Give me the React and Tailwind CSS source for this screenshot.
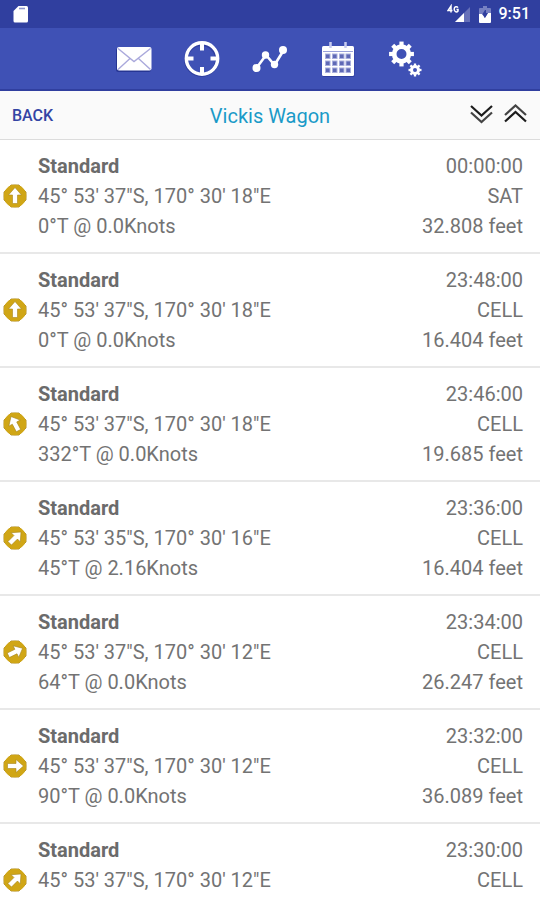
const rows = [
  { time: "00:00:00", pos: "45° 53' 37\"S, 170° 30' 18\"E", source: "SAT", speed: "0°T @ 0.0Knots", alt: "32.808 feet", heading: 0 },
  { time: "23:48:00", pos: "45° 53' 37\"S, 170° 30' 18\"E", source: "CELL", speed: "0°T @ 0.0Knots", alt: "16.404 feet", heading: 0 },
  { time: "23:46:00", pos: "45° 53' 37\"S, 170° 30' 18\"E", source: "CELL", speed: "332°T @ 0.0Knots", alt: "19.685 feet", heading: 332 },
  { time: "23:36:00", pos: "45° 53' 35\"S, 170° 30' 16\"E", source: "CELL", speed: "45°T @ 2.16Knots", alt: "16.404 feet", heading: 45 },
  { time: "23:34:00", pos: "45° 53' 37\"S, 170° 30' 12\"E", source: "CELL", speed: "64°T @ 0.0Knots", alt: "26.247 feet", heading: 64 },
  { time: "23:32:00", pos: "45° 53' 37\"S, 170° 30' 12\"E", source: "CELL", speed: "90°T @ 0.0Knots", alt: "36.089 feet", heading: 90 },
  { time: "23:30:00", pos: "45° 53' 37\"S, 170° 30' 12\"E", source: "CELL", heading: 45 },
];

function StatusBar() {
  return (
    <div className="flex h-7 shrink-0 items-center justify-between bg-[#303f9f] pr-[10px] pl-3 text-white">
      <svg className="h-5 w-5" viewBox="0 0 20 20">
        <path d="M6.5 2H14.5A1.5 1.5 0 0 1 16 3.5V17A1.5 1.5 0 0 1 14.5 18.5H3A1.5 1.5 0 0 1 1.5 17V7Z" fill="#fff" />
        <path d="M7 4.5H13" stroke="#8f98cf" strokeWidth="1.6" />
      </svg>
      <div className="flex items-center gap-2">
        <svg className="h-5 w-6" viewBox="0 0 24 20">
          <path d="M23 3V18H8Z" fill="#6670b9" />
          <path d="M17 9V18H8Z" fill="#fff" />
          <path d="M4 8.500V2L1 6.500H5.500M11 3.600C10 2.300 7.200 2.300 7.200 5.300S10 8.500 11 7V5.600H9.500" fill="none" stroke="#fff" strokeWidth="1.500" />
        </svg>
        <svg className="h-5 w-3" viewBox="0 0 12 20">
          <path d="M4 2H8V4H11Q12 4 12 5V10H0V5Q0 4 1 4H4Z" fill="#7680c2" />
          <path d="M0 10H3L6 14L9 9H12V18Q12 19 11 19H1Q0 19 0 18Z" fill="#fff" />
          <path d="M6 6L3.500 10H5.500V14L9 9H7V6Z" fill="#303f9f" />
        </svg>
        <span className="text-base font-medium">9:51</span>
      </div>
    </div>
  );
}

function MailIcon() {
  return (
    <svg className="h-9 w-9" viewBox="0 0 36 36">
      <rect x="0" y="7" width="35" height="24" rx="2.500" fill="#263593" />
      <rect x="1" y="6" width="34.500" height="23.500" rx="2" fill="#fff" />
      <path d="M2 7.500L18 20.500L34.500 7.500M2 28.500L14 17.500M34.500 28.500L22.500 17.500" fill="none" stroke="#aaa9dc" strokeWidth="1.400" />
    </svg>
  );
}

function TargetIcon() {
  return (
    <svg className="h-9 w-9" viewBox="0 0 36 36" fill="none" stroke="#fff">
      <circle cx="17.500" cy="18.500" r="15.500" stroke="#303f9f" strokeWidth="4" />
      <circle cx="18" cy="17.500" r="15.700" strokeWidth="3.400" />
      <path d="M18 2V9.500M18 26V33.500M2 17.500H9.500M26.500 17.500H34" strokeWidth="4" />
    </svg>
  );
}

function TrackIcon() {
  return (
    <svg className="h-9 w-9" viewBox="0 0 36 36" fill="#fff">
      <path d="M4.500 27L14 14L22.500 24L31.500 9.500" fill="none" stroke="#fff" strokeWidth="2.600" />
      <circle cx="4.500" cy="27" r="4" />
      <circle cx="13.500" cy="14" r="3.700" />
      <circle cx="22.500" cy="23.500" r="3.700" />
      <circle cx="31" cy="9" r="4" />
    </svg>
  );
}

function CalendarIcon() {
  return (
    <svg className="h-9 w-9" viewBox="0 0 36 36">
      <rect x="2.500" y="7" width="32" height="29" rx="1.500" fill="#303f9f" />
      <rect x="2" y="5" width="32" height="30" rx="1.500" fill="#fff" />
      <path d="M10.500 1V7M25.500 1V7" stroke="#c8ccef" strokeWidth="2.500" />
      <path d="M3 10.500H33" stroke="#9aa2da" strokeWidth="1" />
      {[13, 20, 27].map((y) => (
        <g key={y} fill="#5f69b5" stroke="#a9afde" strokeWidth="1">
          <rect x="5.500" y={y} width="4.500" height="4.500" />
          <rect x="12.500" y={y} width="4.500" height="4.500" />
          <rect x="19.500" y={y} width="4.500" height="4.500" />
          <rect x="26" y={y} width="4.500" height="4.500" />
        </g>
      ))}
    </svg>
  );
}

function Gear({ x, y, r, hole, tooth }) {
  return (
    <g transform={`translate(${x} ${y})`}>
      <circle r={(r + hole) / 2} fill="none" stroke="#fff" strokeWidth={r - hole} />
      {[0, 45, 90, 135, 180, 225, 270, 315].map((a) => (
        <rect key={a} x={-tooth / 2} y={-r - tooth * 0.65} width={tooth} height={tooth} fill="#fff" transform={`rotate(${a})`} />
      ))}
    </g>
  );
}

function SettingsIcon() {
  return (
    <svg className="h-9 w-9" viewBox="0 0 36 36">
      <Gear x={13.500} y={13} r={9.7} hole={5} tooth={4.2} />
      <Gear x={27} y={29} r={5} hole={2} tooth={2.3} />
    </svg>
  );
}

function Heading({ deg }) {
  return (
    <svg className="mt-[33px] h-6 w-6 shrink-0" viewBox="0 0 24 24">
      <path d="M8 1H16L23 8V16L16 23H8L1 16V8Z" fill="#d0a616" stroke="#b3943a" strokeWidth="1" strokeLinejoin="round" />
      <circle cx="12" cy="12" r="11.200" fill="#d0a616" />
      <path
        d="M12 3.500L18.500 11H14.500V19.500H9.500V11H5.500Z"
        fill="#fff"
        stroke="#a8871c"
        strokeWidth="0.600"
        transform={`rotate(${deg} 12 12)`}
      />
    </svg>
  );
}

const tabs = [
  { label: "Messages", Icon: MailIcon },
  { label: "Locate", Icon: TargetIcon },
  { label: "Track", Icon: TrackIcon },
  { label: "Calendar", Icon: CalendarIcon },
  { label: "Settings", Icon: SettingsIcon },
];

export default function App() {
  return (
    <div className="flex min-h-screen flex-col bg-white font-['Roboto',sans-serif]">
      <StatusBar />

      <nav className="flex h-[63px] shrink-0 items-center justify-center gap-8 border-b-2 border-[#303f9f] bg-[#3f51b5]">
        {tabs.map(({ label, Icon }) => (
          <button key={label} type="button" aria-label={label} className="cursor-pointer">
            <Icon />
          </button>
        ))}
      </nav>

      <header className="grid h-[49px] shrink-0 grid-cols-3 items-center border-b border-[#dcdcdc] bg-[#fafafa] px-3 pt-[2px]">
        <button type="button" className="cursor-pointer justify-self-start text-base font-medium text-[#3444a4]">
          BACK
        </button>
        <h1 className="text-center text-xl text-[#1b9ac8]">Vickis Wagon</h1>
        <div className="flex justify-end gap-[10px]">
          <button type="button" aria-label="Next" className="cursor-pointer">
            <svg className="h-6 w-6" viewBox="0 0 24 24" fill="none" strokeWidth="2.200">
              <path d="M1 2L11.500 11.500L22 2" stroke="#1c1c1c" />
              <path d="M1 8.500L11.500 18L22 8.500" stroke="#444" />
            </svg>
          </button>
          <button type="button" aria-label="Previous" className="cursor-pointer">
            <svg className="h-6 w-6" viewBox="0 0 24 24" fill="none" strokeWidth="2.200">
              <path d="M1 11L11.500 1.500L22 11" stroke="#444" />
              <path d="M1 17.500L11.500 8L22 17.500" stroke="#1c1c1c" />
            </svg>
          </button>
        </div>
      </header>

      <ul className="text-xl text-[#737373]">
        {rows.map((row) => (
          <li
            key={row.time}
            className="flex items-start border-b-2 border-[#e8e8e8] pt-[11px] pr-[17px] pb-[11px] pl-[3px] leading-[30px] last:border-b-0 last:pb-0"
          >
            <Heading deg={row.heading} />
            <div className="ml-[11px] flex-1">
              <p className="font-bold text-[#6b6b6b]">Standard</p>
              <p>{row.pos}</p>
              {row.speed && <p>{row.speed}</p>}
            </div>
            <div className="text-right">
              <p>{row.time}</p>
              <p>{row.source}</p>
              {row.alt && <p>{row.alt}</p>}
            </div>
          </li>
        ))}
      </ul>
    </div>
  );
}
